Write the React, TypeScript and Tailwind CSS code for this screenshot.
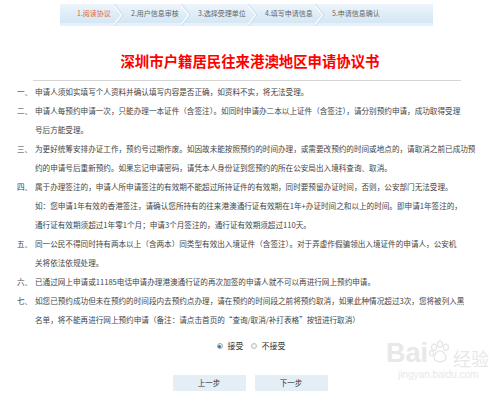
import React from 'react';

const steps = ['1.阅读协议', '2.用户信息审核', '3.选择受理单位', '4.填写申请信息', '5.申请信息确认'];

const items = [
  { n: '一、', lines: ['申请人须如实填写个人资料并确认填写内容是否正确，如资料不实，将无法受理。'] },
  {
    n: '二、',
    lines: [
      '申请人每预约申请一次，只能办理一本证件（含签注）。如同时申请办二本以上证件（含签注），请分别预约申请，成功取得受理',
      '号后方能受理。',
    ],
  },
  {
    n: '三、',
    lines: [
      '为更好统筹安排办证工作，预约号过期作废。如因故未能按照预约的时间办理，或需要改预约的时间或地点的，请取消之前已成功预',
      '约的申请号后重新预约。如果忘记申请密码，请凭本人身份证到您预约的所在公安局出入境科查询、取消。',
    ],
  },
  {
    n: '四、',
    lines: [
      '属于办理签注的，申请人所申请签注的有效期不能超过所持证件的有效期，同时要预留办证时间，否则，公安部门无法受理。',
      '如：您申请1年有效的香港签注，请确认您所持有的往来港澳通行证有效期在1年+办证时间之和以上的时间。即申请1年签注的，',
      '通行证有效期须超过1年零1个月；申请3个月签注的，通行证有效期须超过110天。',
    ],
  },
  {
    n: '五、',
    lines: [
      '同一公民不得同时持有两本以上（含两本）同类型有效出入境证件（含签注）。对于弄虚作假骗领出入境证件的申请人，公安机',
      '关将依法依规处理。',
    ],
  },
  { n: '六、', lines: ['已通过网上申请或11185电话申请办理港澳通行证的再次加签的申请人就不可以再进行网上预约申请。'] },
  {
    n: '七、',
    lines: [
      '如您已预约成功但未在预约的时间段内去预约点办理，请在预约的时间段之前将预约取消，如果此种情况超过3次，您将被列入黑',
      '名单，将不能再进行网上预约申请（备注：请点击首页的“查询/取消/补打表格”按钮进行取消）',
    ],
  },
];

function Chevron() {
  return (
    <svg className="absolute right-[-6px] top-0" width="10" height="22" viewBox="0 0 10 22">
      <polyline points="0,0 8.5,11 0,22" fill="none" stroke="#c9dcea" strokeWidth="1.6" />
      <polyline points="-1,0 7.5,11 -1,22" fill="none" stroke="#ffffff" strokeWidth="1.2" />
    </svg>
  );
}

function Paw() {
  return (
    <svg width="24" height="24" viewBox="0 0 20 20">
      <g fill="none" stroke="#e6e6e6" strokeWidth="1.1">
        <ellipse cx="5" cy="6" rx="2" ry="2.6" />
        <ellipse cx="10" cy="3.5" rx="2" ry="2.6" />
        <ellipse cx="15" cy="6" rx="2" ry="2.6" />
        <ellipse cx="3" cy="11" rx="1.7" ry="2.2" />
        <path d="M10 9 C6 9 4 15 6 17 C8 18.5 12 18.5 14 17 C16 15 14 9 10 9 Z" />
      </g>
    </svg>
  );
}

export default function App() {
  return (
    <div className="relative w-[500px] h-[395px] overflow-hidden bg-white font-['Noto_Sans_CJK_SC','Noto_Sans',sans-serif] text-[#444]">
      {/* step bar */}
      <div className="pt-[4px] pl-[60px]">
        <div className="flex w-[373px] h-[22px] bg-gradient-to-b from-[#eef5fb] via-[#dfedf8] to-[#d5e7f4] border-b-[3px] border-[#e6f1f9]">
          {steps.map((s, i) => (
            <div
              key={s}
              className={
                'relative flex items-center text-[7px] leading-none ' +
                (i === 0 ? 'w-[58px] pl-[17px] text-[#e0643a]' : i === 4 ? 'flex-1 pl-[13px] text-[#666]' : 'w-[67px] pl-[13px] text-[#666]')
              }
            >
              <span>{s}</span>
              {i < 4 && <Chevron />}
            </div>
          ))}
        </div>
      </div>

      {/* title */}
      <h1 className="mt-[26px] text-center text-[14.4px] leading-[18px] font-bold text-[#ff0000]">
        深圳市户籍居民往来港澳地区申请协议书
      </h1>

      <div className="mt-[10px] ml-[33px] w-[428px] h-px bg-[#d5d5d5]" />

      {/* agreement items */}
      <div className="mt-[1px] pl-[17px] text-[7.6px] leading-[19px]">
        {items.map((it) => (
          <div key={it.n} className="flex">
            <span className="w-[18px] shrink-0">{it.n}</span>
            <div className="whitespace-nowrap">
              {it.lines.map((l) => (
                <div key={l}>{l}</div>
              ))}
            </div>
          </div>
        ))}
      </div>

      {/* accept radios */}
      <div className="mt-[11px] flex justify-center items-center gap-[7px] text-[8px] text-[#333] pl-[2px]">
        <label className="flex items-center gap-[5px]">
          <span className="w-[6px] h-[6px] rounded-full border border-[#9aa] bg-[#f2f2f2] flex items-center justify-center">
            <span className="w-[3px] h-[3px] rounded-full bg-[#2f6fae]" />
          </span>
          接受
        </label>
        <label className="flex items-center gap-[5px]">
          <span className="w-[6px] h-[6px] rounded-full border border-[#bbb] bg-[#f4f4f4]" />
          不接受
        </label>
      </div>

      {/* buttons */}
      <div className="mt-[23px] flex justify-center gap-[9px]">
        <button className="w-[73px] h-[16px] bg-[#e4eef7] text-[7.5px] text-[#333] leading-none">上一步</button>
        <button className="w-[73px] h-[16px] bg-[#e4eef7] text-[7.5px] text-[#333] leading-none">下一步</button>
      </div>

      {/* watermark */}
      <div className="absolute left-[386px] top-[340px] text-[#e8e8e8] pointer-events-none">
        <div className="flex items-end font-['Liberation_Sans',sans-serif] font-bold text-[27px] leading-none">
          <span>Bai</span>
          <span className="relative top-[-3px]"><Paw /></span>
          <span className="font-['Noto_Sans_CJK_SC',sans-serif] text-[18px] font-normal ml-[1px]">经验</span>
        </div>
        <div className="mt-[3px] ml-[12px] text-[10px] font-['Liberation_Sans',sans-serif] leading-none">jingyan.baidu.com</div>
      </div>
    </div>
  );
}
